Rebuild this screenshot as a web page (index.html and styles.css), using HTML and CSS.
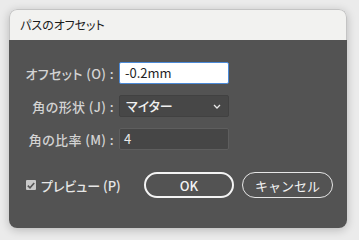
FILE: index.html
```html
<!DOCTYPE html>
<html lang="ja">
<head>
<meta charset="utf-8">
<link rel="stylesheet" href="styles.css">
</head>
<body>
<div class="window">
  <div class="titlebar">パスのオフセット</div>
  <div class="content">
    <div class="form">
      <label class="lbl">オフセット (O) :</label>
      <div class="field field-active">-0.2mm</div>
      <label class="lbl">角の形状 (J) :</label>
      <div class="field field-select"><span>マイター</span>
        <svg class="chev" width="8" height="5" viewBox="0 0 8 5"><path d="M1 1 L4 4 L7 1" fill="none" stroke="#e8e8e8" stroke-width="1.3"/></svg>
      </div>
      <label class="lbl">角の比率 (M) :</label>
      <div class="field field-dark">4</div>
    </div>
    <div class="bottom">
      <div class="check">
        <span class="box"><svg width="8" height="7" viewBox="0 0 8 7"><path d="M0.8 3.6 L3 5.8 L7.2 1" fill="none" stroke="#555" stroke-width="1.6"/></svg></span>
        <span class="check-label">プレビュー (P)</span>
      </div>
      <button class="btn btn-ok">OK</button>
      <button class="btn btn-cancel">キャンセル</button>
    </div>
  </div>
</div>
</body>
</html>
```
FILE: styles.css
```css
html, body {
  margin: 0;
  padding: 0;
}
body {
  width: 359px;
  height: 240px;
  background: #ebebeb;
  font-family: "Noto Sans CJK JP", "Noto Sans", sans-serif;
  font-feature-settings: "palt";
  overflow: hidden;
}
.window {
  margin: 9px 0 0 9px;
  width: 338px;
  height: 219px;
  border-radius: 8px;
  overflow: hidden;
  box-shadow: 0 2px 10px rgba(0,0,0,0.22);
  display: flex;
  flex-direction: column;
}
.titlebar {
  height: 31px;
  box-sizing: border-box;
  background: #f2f2f0;
  border: 1px solid #c4c4c4;
  border-bottom: none;
  border-radius: 8px 8px 0 0;
  color: #1b1b1b;
  font-size: 12px;
  line-height: 30px;
  padding-left: 10px;
}
.content {
  flex: 1;
  background: #535353;
  padding-top: 22px;
}
.form {
  display: grid;
  grid-template-columns: 105px 110px;
  column-gap: 5px;
  row-gap: 11px;
  align-items: center;
}
.lbl {
  text-align: right;
  color: #d4d4d4;
  font-size: 13px;
  font-weight: 500;
  letter-spacing: 0.4px;
}
.field {
  height: 22px;
  box-sizing: border-box;
  font-size: 13px;
  line-height: 20px;
  padding-left: 6px;
  border-radius: 2px;
}
.field-active {
  background: #ffffff;
  border: 1px solid #4b8ad8;
  color: #1f1f1f;
  padding-left: 5px;
}
.field-select {
  background: #474747;
  border: 1px solid #414141;
  color: #f0f0f0;
  font-weight: 500;
  display: flex;
  align-items: center;
  justify-content: space-between;
  padding-right: 7px;
}
.field-dark {
  background: #464646;
  border: 1px solid #5e5e5e;
  color: #eaeaea;
  padding-left: 4px;
}
.bottom {
  display: flex;
  align-items: center;
  margin-top: 22px;
  padding-left: 17px;
}
.check {
  display: flex;
  align-items: center;
  width: 118px;
}
.box {
  width: 10px;
  height: 10px;
  background: #c9c9c9;
  border-radius: 1px;
  display: flex;
  align-items: center;
  justify-content: center;
  margin-right: 5px;
}
.check-label {
  color: #e6e6e6;
  font-size: 13px;
  font-weight: 500;
}
.btn {
  height: 26px;
  box-sizing: border-box;
  background: transparent;
  color: #f2f2f2;
  font-family: inherit;
  font-size: 13px;
  font-weight: 500;
  border-radius: 13px;
  padding: 0;
}
.btn-ok {
  width: 90px;
  border: 2px solid #f4f4f4;
}
.btn-cancel {
  width: 91px;
  margin-left: 8px;
  border: 1px solid #e6e6e6;
  font-weight: normal;
}
```
